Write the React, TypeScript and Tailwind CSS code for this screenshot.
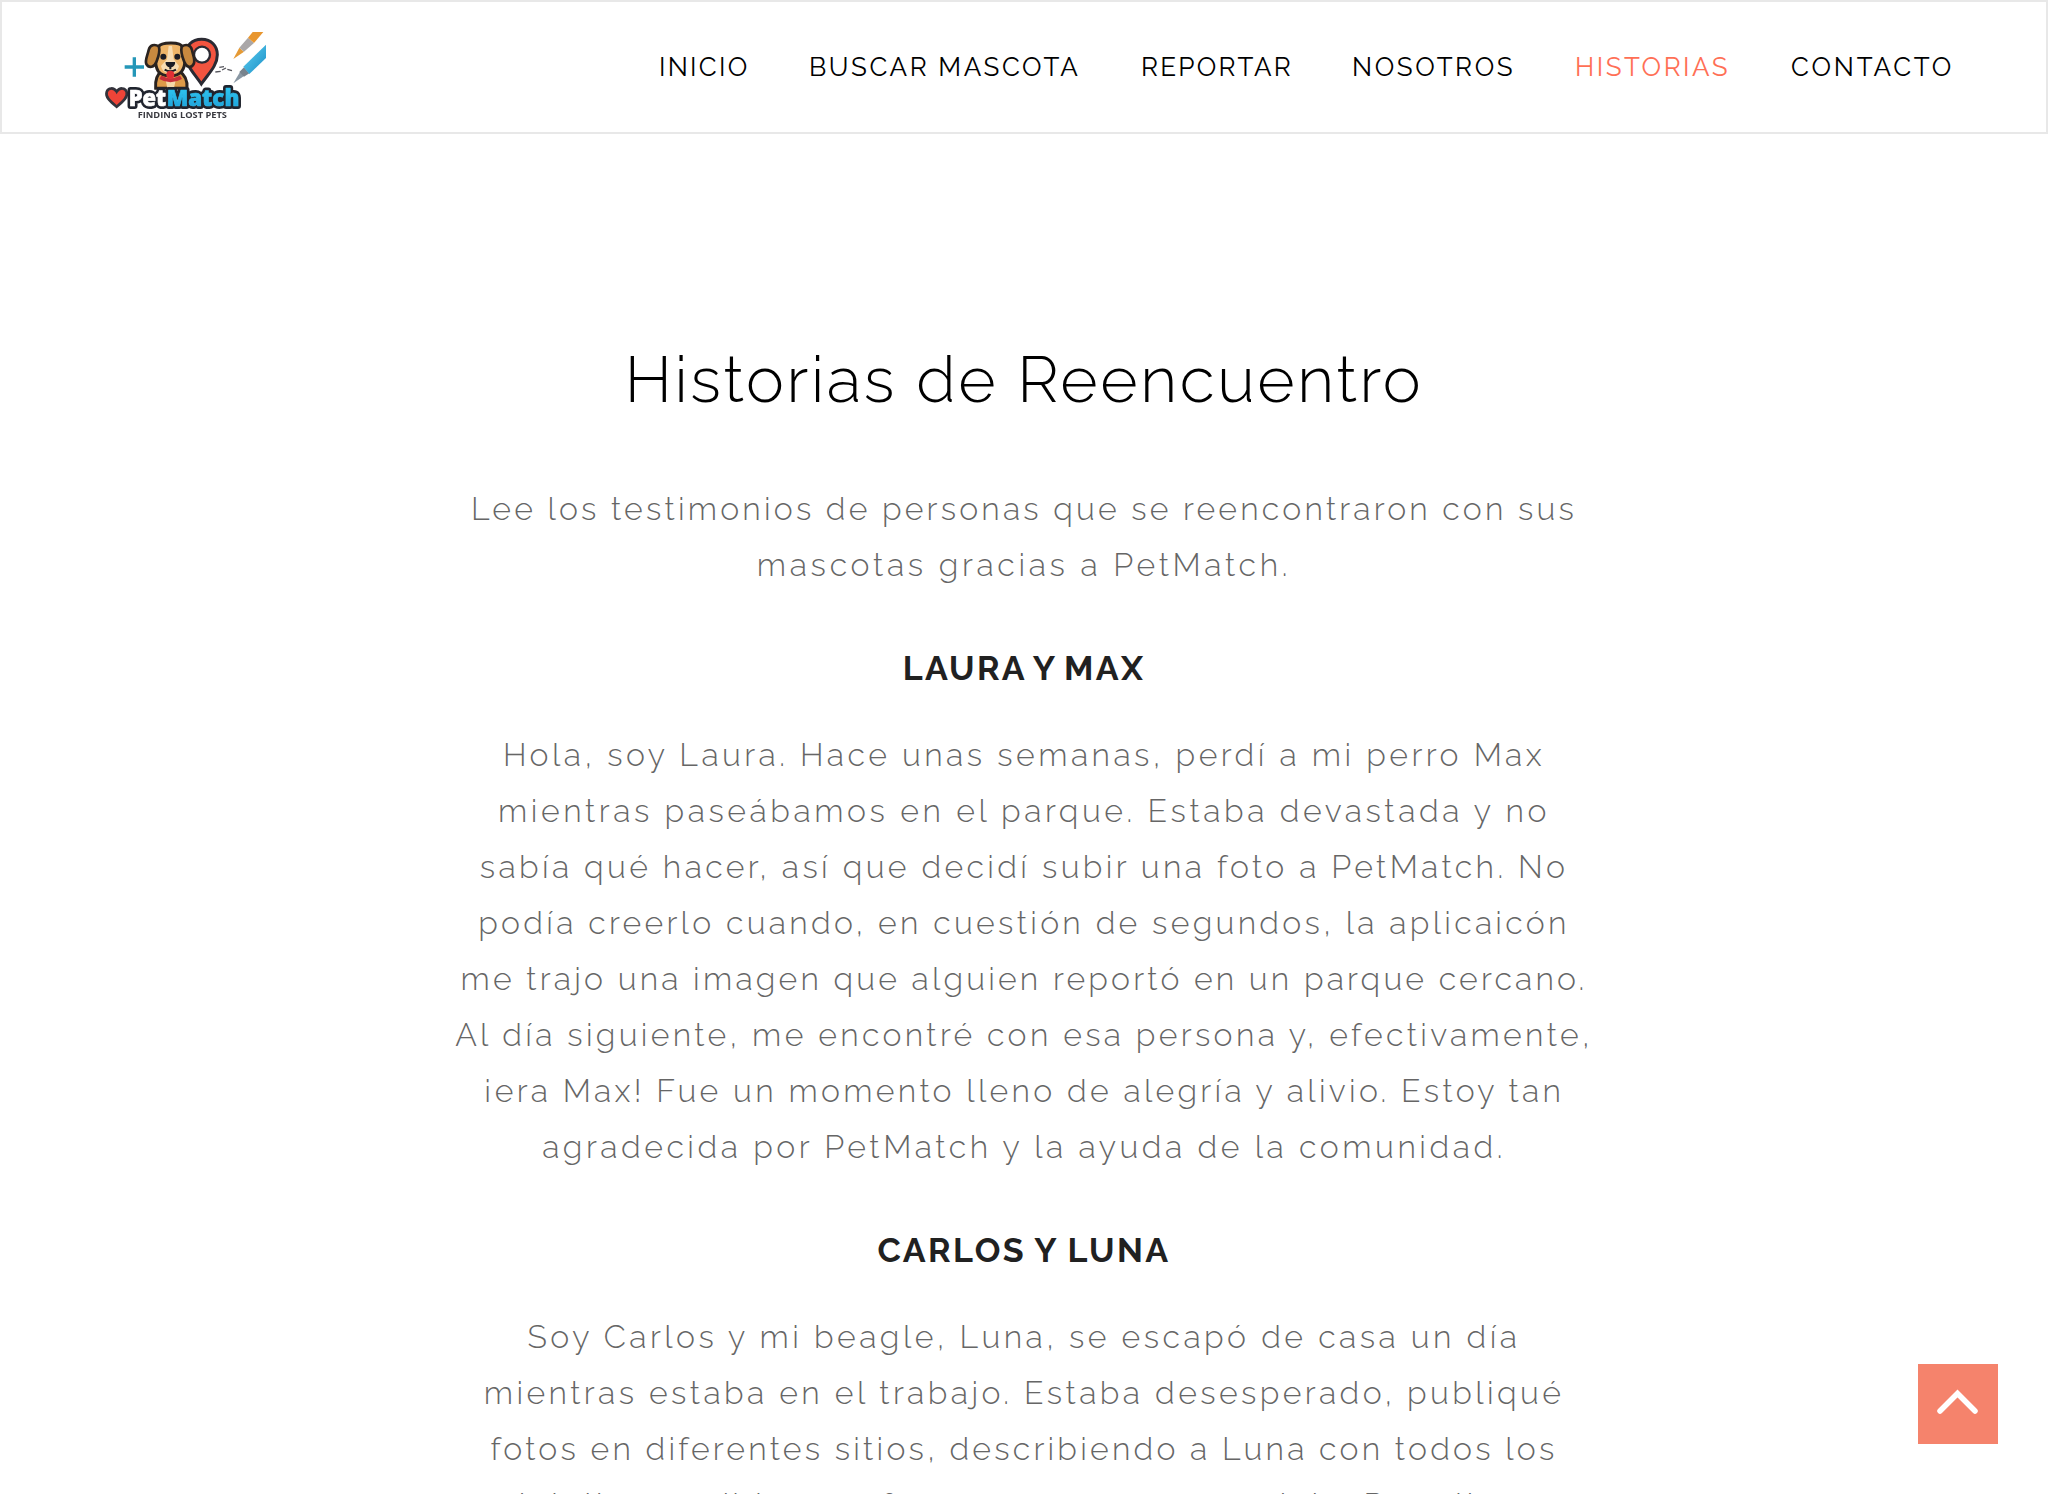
type Line = { text: string; tracking: string };

const NAV = [
  { label: "INICIO", box: "w-[150px] tracking-[2.3px]" },
  { label: "BUSCAR MASCOTA", box: "w-[332px] tracking-[2.55px]" },
  { label: "REPORTAR", box: "w-[211px] tracking-[2.25px]" },
  { label: "NOSOTROS", box: "w-[223px] tracking-[2.6px]" },
  { label: "HISTORIAS", box: "w-[216px] tracking-[2.5px]", active: true },
  { label: "CONTACTO", box: "w-[255px] tracking-[2.8px]" },
];

const INTRO: Line[] = [
  { text: "Lee los testimonios de personas que se reencontraron con sus", tracking: "tracking-[3.19px]" },
  { text: "mascotas gracias a PetMatch.", tracking: "tracking-[3.68px]" },
];

const LAURA: Line[] = [
  { text: "Hola, soy Laura. Hace unas semanas, perdí a mi perro Max", tracking: "tracking-[3.46px]" },
  { text: "mientras paseábamos en el parque. Estaba devastada y no", tracking: "tracking-[3.56px]" },
  { text: "sabía qué hacer, así que decidí subir una foto a PetMatch. No", tracking: "tracking-[3.37px]" },
  { text: "podía creerlo cuando, en cuestión de segundos, la aplicaicón", tracking: "tracking-[3.3px]" },
  { text: "me trajo una imagen que alguien reportó en un parque cercano.", tracking: "tracking-[3.2px]" },
  { text: "Al día siguiente, me encontré con esa persona y, efectivamente,", tracking: "tracking-[3.32px]" },
  { text: "¡era Max! Fue un momento lleno de alegría y alivio. Estoy tan", tracking: "tracking-[3.3px]" },
  { text: "agradecida por PetMatch y la ayuda de la comunidad.", tracking: "tracking-[3.53px]" },
];

const CARLOS: Line[] = [
  { text: "Soy Carlos y mi beagle, Luna, se escapó de casa un día", tracking: "tracking-[3.46px]" },
  { text: "mientras estaba en el trabajo. Estaba desesperado, publiqué", tracking: "tracking-[3.41px]" },
  { text: "fotos en diferentes sitios, describiendo a Luna con todos los", tracking: "tracking-[3.22px]" },
  { text: "detalles posibles, su fuerza, su cara y su pelaje. Por ello, a", tracking: "tracking-[3.2px]" },
];

function Paragraph({ lines }: { lines: Line[] }) {
  return (
    <p className="text-[32px] leading-[56px] font-light text-[#666]">
      {lines.map((l) => (
        <span key={l.text} className={`block whitespace-nowrap ${l.tracking}`}>{l.text}</span>
      ))}
    </p>
  );
}

function Logo() {
  return (
    <svg viewBox="30 36 498 270" className="h-[90px] w-[166px] blur-[0.6px]" aria-label="PetMatch">
      <defs>
        <linearGradient id="word" x1="0" y1="0" x2="0" y2="1">
          <stop offset="0" stopColor="#35d0f5" />
          <stop offset="1" stopColor="#1a9ad6" />
        </linearGradient>
        <linearGradient id="brush" x1="0" y1="0" x2="1" y2="1">
          <stop offset="0" stopColor="#5fd0f2" />
          <stop offset="1" stopColor="#1a8fc6" />
        </linearGradient>
      </defs>
      <path d="M133 112v58M104 141h58" stroke="#2597b8" strokeWidth="10" />
      <path d="M335 58c-30 0-48 20-48 46 0 34 28 58 47 88 20-30 48-54 48-88 0-26-18-46-47-46z" fill="#f2543f" stroke="#2a2a33" strokeWidth="9" />
      <circle cx="336" cy="104" r="24" fill="#fff" stroke="#2a2a33" strokeWidth="7" />
      <path d="M197 205c-2-26 6-44 20-52h50c16 10 26 28 24 52z" fill="#dd9a48" stroke="#2a2320" strokeWidth="9" />
      <path d="M226 176h32l-6 28h-20z" fill="#f5d8a8" />
      <path d="M205 80c8-14 66-16 72 0 10 20 12 56-2 74-14 18-56 18-70 0-12-18-10-54 0-74z" fill="#eeb468" stroke="#2a2320" strokeWidth="9" />
      <path d="M236 78h10l5 40 16 20c-4 18-16 22-26 22s-24-4-28-22l18-20z" fill="#f8dcb2" />
      <path d="M207 80c-14-10-27-4-31 10-3 16-12 30-7 42 8 14 24 10 30-6 6-16 12-28 8-46zM275 80c14-10 27-4 31 10 3 16 11 30 5 42-8 14-22 10-28-6-6-16-12-28-8-46z" fill="#c8893f" stroke="#2a2320" strokeWidth="8" />
      <circle cx="220" cy="110" r="9" fill="#1c1c24" />
      <circle cx="262" cy="110" r="9" fill="#1c1c24" />
      <path d="M227 126h28c2 9-6 16-14 16s-16-7-14-16z" fill="#1c1c24" />
      <path d="M241 140v8M224 149q17 10 34 0" stroke="#1c1c24" strokeWidth="6" fill="none" />
      <path d="M211 172q30 18 62 0" stroke="#c7303a" strokeWidth="12" fill="none" />
      <circle cx="241" cy="164" r="12" fill="#e02f35" />
      <path d="M376 156l16-2M388 142l14-2M396 150l12-6M412 148l14 4" stroke="#55555c" strokeWidth="4" />
      <path d="M430 117l18-34 14 12z" fill="#e59a35" />
      <path d="M448 83l26-30 18 16-30 26z" fill="#aaa7a8" />
      <path d="M474 53l14-17h32l-28 33z" fill="#e8962f" />
      <path d="M430 190l20-34 12 12z" fill="#8a98a4" />
      <path d="M448 156l14-14 16 18-16 10z" fill="#78838d" />
      <path d="M460 140l68-66v40l-50 48z" fill="url(#brush)" />
      <path d="M80 260c-22-18-34-30-30-44 4-14 22-14 30-1 8-13 26-13 30 1 4 14-8 26-30 44z" fill="#ee4438" stroke="#33333b" strokeWidth="8" />
      <g fontFamily="'Open Sans', sans-serif" fontWeight="800" fontSize="68" strokeLinejoin="round">
        <g stroke="#20242e" strokeWidth="18">
          <text x="116" y="257" textLength="112" lengthAdjust="spacingAndGlyphs">Pet</text>
          <text x="230" y="257" textLength="218" lengthAdjust="spacingAndGlyphs">Match</text>
        </g>
        <text x="116" y="257" textLength="112" lengthAdjust="spacingAndGlyphs" fill="#fff" stroke="#fff" strokeWidth="2">Pet</text>
        <text x="230" y="257" textLength="218" lengthAdjust="spacingAndGlyphs" fill="url(#word)" stroke="#2bb8e8" strokeWidth="2">Match</text>
      </g>
      <text x="143" y="294" textLength="268" lengthAdjust="spacingAndGlyphs" fill="#3a3a40" fontFamily="'Open Sans', sans-serif" fontWeight="700" fontSize="26">
        FINDING LOST PETS
      </text>
    </svg>
  );
}

export default function App() {
  return (
    <div className="h-[1494px] overflow-hidden bg-white font-[Raleway,Lato,sans-serif]">
      <header className="flex h-[134px] items-start justify-between border-2 border-[#e8e8e8] bg-white pl-[98px]">
        <a href="#" className="mt-[30px]"><Logo /></a>
        <nav className="mt-[49px] flex text-[26px] leading-[32px] text-black">
          {NAV.map((n) => (
            <a key={n.label} href="#" className={`block whitespace-nowrap ${n.box} ${n.active ? "text-[#ff6f55]" : ""}`}>{n.label}</a>
          ))}
        </nav>
      </header>
      <main className="mx-auto flex w-[1170px] flex-col items-center pt-[206px] text-center">
        <h1 className="mb-[61px] text-[64px] leading-[80px] font-light tracking-[2.62px] text-black">Historias de Reencuentro</h1>
        <Paragraph lines={INTRO} />
        <h2 className="mt-[55px] mb-[39px] text-[34px] leading-[40px] font-bold tracking-[2.3px] [word-spacing:-2.5px] text-[#212121]">LAURA Y MAX</h2>
        <Paragraph lines={LAURA} />
        <h2 className="mt-[55px] mb-[39px] text-[34px] leading-[40px] font-bold tracking-[2.4px] [word-spacing:-1px] text-[#212121]">CARLOS Y LUNA</h2>
        <Paragraph lines={CARLOS} />
      </main>
      <button className="fixed right-[50px] bottom-[50px] flex size-[80px] items-center justify-center bg-[#f5836c]" aria-label="Subir">
        <svg viewBox="0 0 80 80" className="size-full" fill="none" stroke="#fff" strokeWidth="5.5" strokeLinecap="round">
          <path d="M22 47L39.500 29.500L57 47" strokeLinejoin="miter" />
        </svg>
      </button>
    </div>
  );
}
